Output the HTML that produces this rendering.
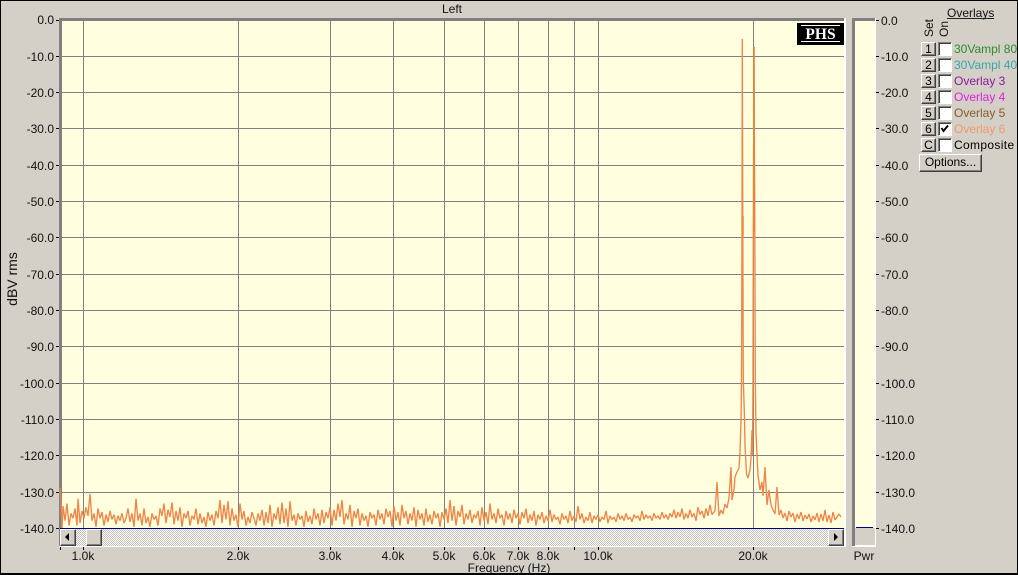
<!DOCTYPE html>
<html>
<head>
<meta charset="utf-8">
<style>
html,body{margin:0;padding:0;width:1018px;height:575px;overflow:hidden;background:#d4d0c8;}
#w{position:relative;width:1018px;height:575px;overflow:hidden;background:#d4d0c8;font-family:"Liberation Sans",Arial,sans-serif;font-size:12px;color:#000;}
svg{position:absolute;left:0;top:0;}
svg text{font-family:"Liberation Sans",Arial,sans-serif;font-size:12px;fill:#111;}
.b{position:absolute;box-sizing:border-box;background:#d4d0c8;border:1px solid;border-color:#fff #404040 #404040 #fff;box-shadow:inset -1px -1px 0 #808080;text-align:center;line-height:12px;}
.c{position:absolute;left:938px;width:14px;height:14px;box-sizing:border-box;background:#fff;border:1px solid;border-color:#808080 #fff #fff #808080;box-shadow:inset 1px 1px 0 #404040;}
.l{position:absolute;left:954px;white-space:nowrap;line-height:14px;}
</style>
</head>
<body>
<div id="w">
<svg width="1018" height="575" viewBox="0 0 1018 575" shape-rendering="crispEdges">
<defs>
<pattern id="d" width="2" height="2" patternUnits="userSpaceOnUse">
<rect width="2" height="2" fill="#fff"/>
<rect width="1" height="1" fill="#c4c0b8"/>
<rect x="1" y="1" width="1" height="1" fill="#c4c0b8"/>
</pattern>
</defs>
<!-- window border -->
<rect x="0" y="0" width="1018" height="1" fill="#000"/>
<rect x="0" y="0" width="1" height="575" fill="#000"/>
<rect x="1017" y="0" width="1" height="575" fill="#000"/>
<rect x="0" y="573" width="1018" height="2" fill="#000"/>

<!-- main plot -->
<rect x="59" y="18" width="787" height="529" fill="#fff"/>
<rect x="62" y="21" width="782" height="507" fill="#ffffe0"/>
<rect x="59" y="18" width="785" height="3" fill="#808080"/>
<rect x="59" y="18" width="3" height="528" fill="#808080"/>

<g fill="#808080">
<rect x="62" y="56" width="782" height="1"/><rect x="62" y="92" width="782" height="1"/>
<rect x="62" y="128" width="782" height="1"/><rect x="62" y="165" width="782" height="1"/>
<rect x="62" y="201" width="782" height="1"/><rect x="62" y="237" width="782" height="1"/>
<rect x="62" y="274" width="782" height="1"/><rect x="62" y="310" width="782" height="1"/>
<rect x="62" y="346" width="782" height="1"/><rect x="62" y="383" width="782" height="1"/>
<rect x="62" y="419" width="782" height="1"/><rect x="62" y="455" width="782" height="1"/>
<rect x="62" y="492" width="782" height="1"/>
<rect x="83" y="21" width="1" height="507"/><rect x="238" y="21" width="1" height="507"/>
<rect x="330" y="21" width="1" height="507"/><rect x="393" y="21" width="1" height="507"/>
<rect x="444" y="21" width="1" height="507"/><rect x="484" y="21" width="1" height="507"/>
<rect x="518" y="21" width="1" height="507"/><rect x="548" y="21" width="1" height="507"/>
<rect x="574" y="21" width="1" height="507"/><rect x="598" y="21" width="1" height="507"/>
<rect x="753" y="21" width="1" height="507"/>
</g>

<!-- trace: noise floor -->
<path transform="translate(0,528) scale(1,1.22) translate(0,-528)" vector-effect="non-scaling-stroke" shape-rendering="auto" fill="none" stroke="#ee8648" stroke-width="1.35" stroke-linejoin="bevel" d="M60 495 L61 507 62 528 63 510 65 522 67 508 69 526 71 516 73 520 75 512 77 526 78 504 80 524 82 514 84 520 86 511 88 518 90 500 92 522 94 516 96 527 98 512 100 520 102 515 104 526 106 517 108 523 110 514 112 521 114 517 116 525 118 518 120 522 122 516 124 524 126 520 128 512 130 523 132 516 134 527 136 504 138 522 140 516 142 526 144 512 146 524 148 519 150 527 152 516 154 521 156 518 158 526 160 512 162 518 164 508 166 524 168 513 170 519 172 507 174 525 176 514 178 522 180 511 182 527 184 516 186 520 188 514 190 526 192 518 194 521 196 512 198 525 200 516 202 524 204 519 206 527 208 515 210 522 212 517 214 526 216 514 218 520 220 505 222 524 224 509 226 521 228 506 230 526 232 512 234 522 236 517 238 527 240 508 242 521 244 514 246 526 248 519 250 524 252 515 254 520 256 526 258 516 260 522 262 513 264 526 266 515 268 524 270 509 272 527 274 516 276 521 278 511 280 525 282 507 284 524 286 512 288 527 290 506 292 522 294 517 296 526 298 516 300 521 302 518 304 527 306 514 308 523 310 518 312 525 314 512 316 521 318 516 320 526 322 513 324 524 326 515 328 520 330 511 332 526 334 513 336 522 338 508 340 519 342 505 344 525 346 516 348 521 350 509 352 527 354 514 356 520 358 512 360 526 362 516 364 522 366 518 368 527 370 515 372 520 374 517 376 526 378 513 380 521 382 516 384 525 386 512 388 519 390 514 392 527 394 510 396 522 398 515 400 526 402 509 404 520 406 514 408 525 410 516 412 522 414 511 416 527 418 513 420 521 422 516 424 526 426 512 428 523 430 517 432 525 434 514 436 520 438 516 440 527 442 515 444 521 446 512 448 524 450 505 452 522 454 510 456 526 458 514 460 519 462 509 464 525 466 516 468 521 470 513 472 524 474 517 476 520 478 514 480 526 482 511 484 522 486 515 488 525 490 508 492 521 494 516 496 524 498 512 500 520 502 517 504 526 506 514 508 521 510 516 512 524 514 513 516 520 518 516 520 525 522 515 524 520 526 512 528 524 530 517 532 522 534 514 536 526 538 517 540 521 542 515 544 524 546 518 548 522 550 513 552 523 554 517 556 521 558 519 560 525 562 516 564 521 566 518 568 524 570 514 572 522 574 518 576 523 578 510 580 521 582 516 584 524 586 519 588 522 590 515 592 524 594 518 596 521 598 517 600 523 602 519 604 521 606 514 608 524 610 518 612 521 614 519 616 523 618 516 620 521 622 518 624 522 626 516 628 521 630 519 632 523 634 517 636 520 638 518 640 522 642 514 644 521 646 517 648 520 650 518 652 522 654 516 656 520 658 518 660 521 662 515 664 520 666 517 668 521 670 516 672 519 674 513 676 520 678 515 680 519 682 512 684 521 686 516 688 520 690 513 692 519 694 516 696 522 698 511 700 517 702 514 704 520 706 512 708 518 710 509 712 517 715 514"/>
<!-- trace: carrier peaks -->
<path shape-rendering="auto" fill="none" stroke="#ee8648" stroke-width="1.35" stroke-linejoin="bevel" d="M715 511 L717 482 719 516 721 510 723 514 725 504 727 508 729 498 731 467 732 500 734 490 735 477 737 472 739 468 740 452 741 420 741.5 380 742 232 742.3 39 742.8 232 743.3 380 744.5 418 745 445 746.5 474 748 478 750 470 751 458 752 430 752.5 455 753 380 753.3 232 754 47 754.8 232 755.3 380 756 432 757 455 758 475 760 490 762 482 763 496 765 467 767 505 769 490 771 505 773 510 775 514 777 487 779 515 781 510 783 518 785 513 787 521 789 511 791 517 793 513 795 522 797 514 799 519 801 512 803 521 805 515 807 519 809 514 811 522 813 516 815 520 817 513 819 522 821 514 823 521 825 510 827 522 829 515 831 523 833 512 835 520 837 517 839 514 841 517"/>
<path shape-rendering="auto" fill="none" stroke="#ee8030" stroke-width="1.4" d="M743 216V236M754 47V232"/>

<!-- navy baseline -->
<rect x="60" y="528" width="784" height="1" fill="#000080"/>

<!-- scrollbar track -->
<rect x="62" y="529" width="782" height="17" fill="url(#d)"/>

<!-- ticks left and right -->
<g fill="#000">
<rect x="56" y="20" width="3" height="1"/><rect x="56" y="56" width="3" height="1"/><rect x="56" y="92" width="3" height="1"/>
<rect x="56" y="128" width="3" height="1"/><rect x="56" y="165" width="3" height="1"/><rect x="56" y="201" width="3" height="1"/>
<rect x="56" y="237" width="3" height="1"/><rect x="56" y="274" width="3" height="1"/><rect x="56" y="310" width="3" height="1"/>
<rect x="56" y="346" width="3" height="1"/><rect x="56" y="383" width="3" height="1"/><rect x="56" y="419" width="3" height="1"/>
<rect x="56" y="455" width="3" height="1"/><rect x="56" y="492" width="3" height="1"/><rect x="56" y="528" width="3" height="1"/>
<rect x="876" y="20" width="3" height="1"/><rect x="876" y="56" width="3" height="1"/><rect x="876" y="92" width="3" height="1"/>
<rect x="876" y="128" width="3" height="1"/><rect x="876" y="165" width="3" height="1"/><rect x="876" y="201" width="3" height="1"/>
<rect x="876" y="237" width="3" height="1"/><rect x="876" y="274" width="3" height="1"/><rect x="876" y="310" width="3" height="1"/>
<rect x="876" y="346" width="3" height="1"/><rect x="876" y="383" width="3" height="1"/><rect x="876" y="419" width="3" height="1"/>
<rect x="876" y="455" width="3" height="1"/><rect x="876" y="492" width="3" height="1"/><rect x="876" y="528" width="3" height="1"/>
<rect x="60" y="547" width="1" height="3"/><rect x="83" y="547" width="1" height="3"/><rect x="238" y="547" width="1" height="3"/>
<rect x="330" y="547" width="1" height="3"/><rect x="393" y="547" width="1" height="3"/><rect x="444" y="547" width="1" height="3"/>
<rect x="484" y="547" width="1" height="3"/><rect x="518" y="547" width="1" height="3"/><rect x="548" y="547" width="1" height="3"/>
<rect x="574" y="547" width="1" height="3"/><rect x="598" y="547" width="1" height="3"/><rect x="753" y="547" width="1" height="3"/>
</g>

<!-- power bar -->
<rect x="852" y="18" width="24" height="529" fill="#fff"/>
<rect x="855" y="21" width="20" height="507" fill="#ffffe0"/>
<rect x="855" y="528" width="20" height="17" fill="#d4d0c8"/>
<rect x="852" y="18" width="23" height="3" fill="#808080"/>
<rect x="852" y="18" width="3" height="528" fill="#808080"/>
<rect x="856" y="527" width="17" height="1" fill="#000080"/>

<!-- PHS logo -->
<rect x="797" y="23" width="47" height="22" fill="#000"/>
<rect x="801" y="25" width="39" height="1" fill="#fff"/>
<rect x="801" y="41" width="39" height="1" fill="#fff"/>
<text x="820.5" y="39" text-anchor="middle" shape-rendering="auto" style="font-family:'Liberation Serif',serif;font-weight:bold;font-size:15.5px;fill:#fff;">PHS</text>

<g shape-rendering="auto">
<text x="452" y="13" text-anchor="middle">Left</text>
<g text-anchor="end">
<text x="54" y="24">0.0</text><text x="54" y="61">-10.0</text><text x="54" y="97">-20.0</text>
<text x="54" y="133">-30.0</text><text x="54" y="170">-40.0</text><text x="54" y="206">-50.0</text>
<text x="54" y="242">-60.0</text><text x="54" y="279">-70.0</text><text x="54" y="315">-80.0</text>
<text x="54" y="351">-90.0</text><text x="54" y="388">-100.0</text><text x="54" y="424">-110.0</text>
<text x="54" y="460">-120.0</text><text x="54" y="497">-130.0</text><text x="54" y="533">-140.0</text>
</g>
<g>
<text x="881" y="25">0.0</text><text x="881" y="61">-10.0</text><text x="881" y="97">-20.0</text>
<text x="881" y="133">-30.0</text><text x="881" y="170">-40.0</text><text x="881" y="206">-50.0</text>
<text x="881" y="242">-60.0</text><text x="881" y="279">-70.0</text><text x="881" y="315">-80.0</text>
<text x="881" y="351">-90.0</text><text x="881" y="388">-100.0</text><text x="881" y="424">-110.0</text>
<text x="881" y="460">-120.0</text><text x="881" y="497">-130.0</text><text x="881" y="533">-140.0</text>
</g>
<g text-anchor="middle">
<text x="83" y="560">1.0k</text><text x="238" y="560">2.0k</text><text x="330" y="560">3.0k</text>
<text x="393" y="560">4.0k</text><text x="444" y="560">5.0k</text><text x="484" y="560">6.0k</text>
<text x="518" y="560">7.0k</text><text x="548" y="560">8.0k</text><text x="598" y="560">10.0k</text>
<text x="753" y="560">20.0k</text><text x="864" y="560">Pwr</text>
<text x="509" y="572">Frequency (Hz)</text>
<text transform="translate(17,279) rotate(-90)" style="font-size:14px">dBV rms</text>
</g>
<text transform="translate(933,37) rotate(-90)">Set</text>
<text transform="translate(948,37) rotate(-90)">On</text>
<text x="947" y="17">Overlays</text>
</g>
<rect x="947" y="18" width="47" height="1" fill="#222"/>
</svg>

<!-- scrollbar buttons -->
<div class="b" style="left:60px;top:529px;width:16px;height:17px;"></div>
<div class="b" style="left:86px;top:529px;width:16px;height:17px;"></div>
<div class="b" style="left:828px;top:529px;width:16px;height:17px;"></div>
<svg width="1018" height="575" viewBox="0 0 1018 575" style="pointer-events:none">
<path d="M69 533 L65 537 L69 541 Z" fill="#000"/>
<path d="M834 533 L838 537 L834 541 Z" fill="#000"/>
</svg>

<!-- overlay rows -->
<div class="b" style="left:921px;top:42px;width:15px;height:14px;">1</div>
<div class="b" style="left:921px;top:58px;width:15px;height:14px;">2</div>
<div class="b" style="left:921px;top:74px;width:15px;height:14px;">3</div>
<div class="b" style="left:921px;top:90px;width:15px;height:14px;">4</div>
<div class="b" style="left:921px;top:106px;width:15px;height:14px;">5</div>
<div class="b" style="left:921px;top:122px;width:15px;height:14px;">6</div>
<div class="b" style="left:921px;top:138px;width:15px;height:14px;">C</div>

<div class="c" style="top:42px;"></div>
<div class="c" style="top:58px;"></div>
<div class="c" style="top:74px;"></div>
<div class="c" style="top:90px;"></div>
<div class="c" style="top:106px;"></div>
<div class="c" style="top:122px;"></div>
<div class="c" style="top:138px;"></div>
<svg width="1018" height="575" viewBox="0 0 1018 575" style="pointer-events:none">
<path d="M941.5 128 L943.5 131 L948 125.5" fill="none" stroke="#000" stroke-width="2"/>
</svg>

<div class="l" style="top:42px;color:#2e8b2e;width:63px;overflow:hidden;">30Vampl 80</div>
<div class="l" style="top:58px;color:#35a8a8;width:63px;overflow:hidden;">30Vampl 40</div>
<div class="l" style="top:74px;color:#8a1a9a;">Overlay 3</div>
<div class="l" style="top:90px;color:#e020e0;">Overlay 4</div>
<div class="l" style="top:106px;color:#8a5a2a;">Overlay 5</div>
<div class="l" style="top:122px;color:#f0986a;">Overlay 6</div>
<div class="l" style="top:138px;color:#000;letter-spacing:.35px;">Composite</div>

<div class="b" style="left:919px;top:154px;width:63px;height:18px;line-height:15px;">Options...</div>
</div>
</body>
</html>
